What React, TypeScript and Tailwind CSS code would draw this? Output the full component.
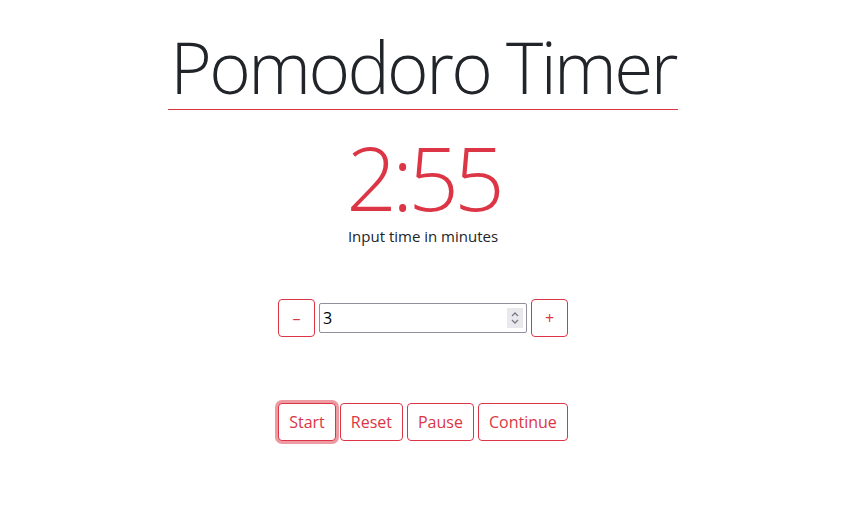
import React, { useState } from 'react';

const btn =
  'h-[38px] px-[10px] border border-[#dc3545] rounded-[4px] text-[#dc3545] text-[16px] bg-white leading-none';

export default function App() {
  const [minutes, setMinutes] = useState('3');

  return (
    <div className="w-[846px] h-[525px] bg-white flex flex-col items-center font-['Open_Sans',sans-serif] text-[#212529]">
      <div className="mt-[25px] inline-block border-b border-[#dc3545] px-[2px]">
        <h1 className="text-[71px] font-light leading-[84px] tracking-[-2.6px]">Pomodoro Timer</h1>
      </div>

      <div className="mt-[27px] text-[89px] font-light leading-[80px] text-[#dc3545] tracking-[-5px]">2:55</div>
      <p className="mt-[8px] text-[15px] leading-[22px]">Input time in minutes</p>

      <div className="mt-[52px] flex items-center gap-[4px]">
        <button className={`${btn} w-[37px] px-0`}>–</button>
        <div className="relative">
          <input
            value={minutes}
            onChange={(e) => setMinutes(e.target.value)}
            className="w-[208px] h-[30px] border border-[#8f8f9d] rounded-[2px] pl-[3px] text-[16px] text-black outline-none"
          />
          <div className="absolute right-[4px] top-[5px] w-[16px] h-[20px] bg-[#e9e9ed] flex flex-col items-center justify-center">
            <svg width="10" height="16" viewBox="0 0 10 16" fill="none" stroke="#7a7a84" strokeWidth="1.3">
              <path d="M2 6 L5 3 L8 6" />
              <path d="M2 10 L5 13 L8 10" />
            </svg>
          </div>
        </div>
        <button className={`${btn} w-[37px] px-0`}>+</button>
      </div>

      <div className="mt-[66px] flex items-center gap-[4px]">
        <button className={`${btn} shadow-[0_0_0_3px_rgba(220,53,69,0.5)]`}>Start</button>
        <button className={btn}>Reset</button>
        <button className={btn}>Pause</button>
        <button className={btn}>Continue</button>
      </div>
    </div>
  );
}
